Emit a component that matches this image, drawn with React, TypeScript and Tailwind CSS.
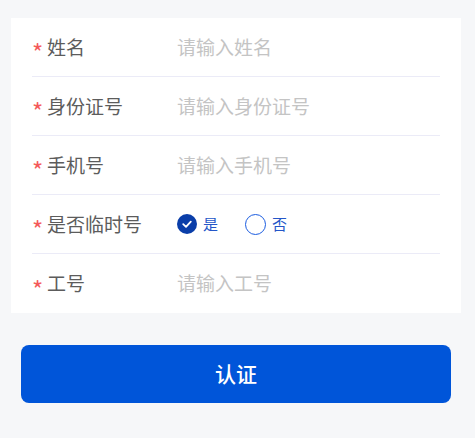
const fields = [
  { label: "姓名", placeholder: "请输入姓名" },
  { label: "身份证号", placeholder: "请输入身份证号" },
  { label: "手机号", placeholder: "请输入手机号" },
  { label: "是否临时号", radio: true },
  { label: "工号", placeholder: "请输入工号" },
];

const font = { fontFamily: '"Noto Sans CJK SC", "Noto Sans", sans-serif' };

export default function App() {
  return (
    <div className="min-h-[438px] bg-[#f6f7f9] pt-[18px] pl-[11px] pr-[14px]" style={font}>
      <div className="bg-white px-[21px]">
        {fields.map((f, i) => (
          <div
            key={f.label}
            className={`flex h-[59px] items-center ${i < fields.length - 1 ? "border-b border-[#ebebf7]" : ""}`}
          >
            <div className="flex w-[145px] items-center">
              <span className="w-[15px] translate-y-[5px] text-[24px] leading-none text-[#f45a5a]">*</span>
              <span className="text-[19px] text-[#5c5c5c]">{f.label}</span>
            </div>
            {f.radio ? (
              <div className="flex items-center text-[15px]">
                <span className="flex h-[20px] w-[20px] items-center justify-center rounded-full bg-[#0a3ea9]">
                  <svg width="12" height="12" viewBox="0 0 12 12" fill="none">
                    <path d="M2.2 6.2 L5 8.8 L9.8 3.6" stroke="white" strokeWidth="1.8" strokeLinecap="round" strokeLinejoin="round" />
                  </svg>
                </span>
                <span className="ml-[6px] text-[#2456c8]">是</span>
                <span className="ml-[27px] h-[21px] w-[21px] rounded-full border-[1.5px] border-[#1a5ce0]" />
                <span className="ml-[6px] text-[#2456c8]">否</span>
              </div>
            ) : (
              <span className="text-[19px] text-[#c4c4c4]">{f.placeholder}</span>
            )}
          </div>
        ))}
      </div>
      <div className="mt-[32px] px-[10px]">
        <button className="flex h-[58px] w-full items-center justify-center rounded-lg bg-[#0055d9] text-[21px] font-medium text-white">
          认证
        </button>
      </div>
    </div>
  );
}
